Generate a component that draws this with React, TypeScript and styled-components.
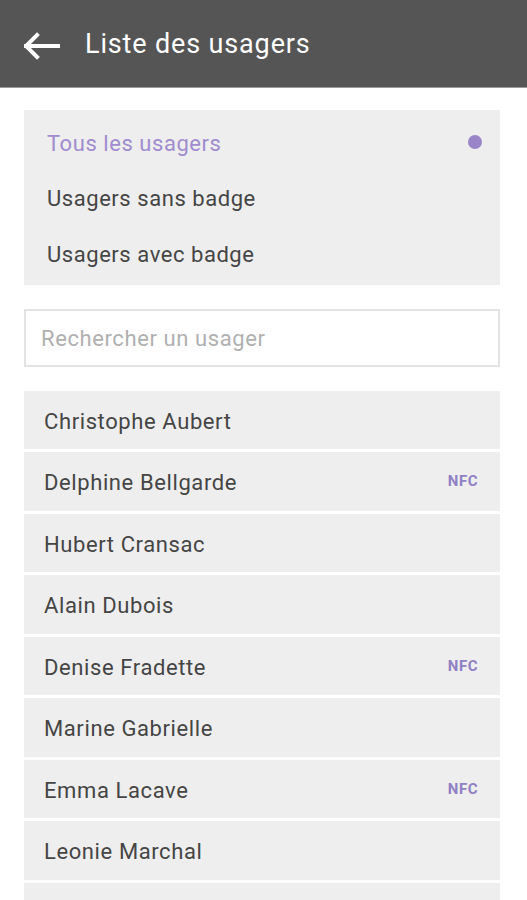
import React from 'react';
import styled, { createGlobalStyle } from 'styled-components';

const GlobalStyle = createGlobalStyle`
  body {
    margin: 0;
    background: #ffffff;
    font-family: Roboto, "Liberation Sans", sans-serif;
  }
`;

const Page = styled.div`
  width: 527px;
  height: 900px;
  background: #ffffff;
  overflow: hidden;
`;

const Header = styled.header`
  height: 88px;
  background: #555555;
  display: flex;
  align-items: center;
  padding-left: 24px;
  box-sizing: border-box;
  border-bottom: 1px solid #9a9a9a;
`;

const BackButton = styled.button`
  width: 36px;
  height: 36px;
  padding: 0;
  border: none;
  background: none;
  display: flex;
  align-items: center;
  cursor: pointer;
`;

const Title = styled.h1`
  margin: 0 0 0 25px;
  font-size: 27px;
  font-weight: 400;
  color: #ffffff;
  letter-spacing: 0.85px;
`;

const Content = styled.main`
  padding: 22px 27px 0 24px;
  display: flex;
  flex-direction: column;
`;

const FilterPanel = styled.div`
  background: #eeeeee;
  padding: 4px 0;
  display: flex;
  flex-direction: column;
`;

const FilterItem = styled.div<{ active?: boolean }>`
  height: 55.5px;
  box-sizing: border-box;
  display: flex;
  align-items: center;
  justify-content: space-between;
  padding: 3px 18px 0 23px;
  font-size: 22px;
  letter-spacing: 0.55px;
  color: ${props => (props.active ? '#a08ccf' : '#454545')};
`;

const Dot = styled.span`
  width: 14px;
  height: 14px;
  border-radius: 50%;
  margin-top: -2px;
  background: #9a85c8;
`;

const SearchInput = styled.input`
  margin-top: 24px;
  height: 58px;
  box-sizing: border-box;
  border: 2px solid #e3e3e3;
  padding: 2px 15px 0;
  font-family: Roboto, "Liberation Sans", sans-serif;
  font-size: 22px;
  letter-spacing: 0.6px;
  color: #444444;
  outline: none;
  &::placeholder {
    color: #b0b0b0;
  }
`;

const UserList = styled.ul`
  list-style: none;
  margin: 24px 0 0;
  padding: 0;
  display: flex;
  flex-direction: column;
  gap: 3px;
`;

const UserRow = styled.li`
  height: 58.5px;
  box-sizing: border-box;
  background: #eeeeee;
  display: flex;
  align-items: center;
  justify-content: space-between;
  padding: 3px 22px 0 20px;
  font-size: 22px;
  letter-spacing: 0.6px;
  color: #454545;
`;

const NfcTag = styled.span`
  font-size: 15px;
  font-weight: 700;
  letter-spacing: 0.5px;
  color: #9080c4;
  align-self: flex-start;
  margin-top: 17px;
`;

const filters = [
  { label: 'Tous les usagers', active: true },
  { label: 'Usagers sans badge', active: false },
  { label: 'Usagers avec badge', active: false },
];

const users = [
  { name: 'Christophe Aubert', nfc: false },
  { name: 'Delphine Bellgarde', nfc: true },
  { name: 'Hubert Cransac', nfc: false },
  { name: 'Alain Dubois', nfc: false },
  { name: 'Denise Fradette', nfc: true },
  { name: 'Marine Gabrielle', nfc: false },
  { name: 'Emma Lacave', nfc: true },
  { name: 'Leonie Marchal', nfc: false },
  { name: 'Lucie Noiret', nfc: false },
];

const BackArrow = () => (
  <svg width="36" height="36" viewBox="0 0 36 36">
    <path
      d="M2 20 H34 M13 9 L2 20 L13 31"
      fill="none"
      stroke="#ffffff"
      strokeWidth="4"
      strokeLinecap="square"
      strokeLinejoin="miter"
    />
  </svg>
);

const App: React.FC = () => {
  return (
    <Page>
      <GlobalStyle />
      <Header>
        <BackButton aria-label="Retour">
          <BackArrow />
        </BackButton>
        <Title>Liste des usagers</Title>
      </Header>
      <Content>
        <FilterPanel>
          {filters.map(f => (
            <FilterItem key={f.label} active={f.active}>
              {f.label}
              {f.active && <Dot />}
            </FilterItem>
          ))}
        </FilterPanel>
        <SearchInput placeholder="Rechercher un usager" />
        <UserList>
          {users.map(u => (
            <UserRow key={u.name}>
              {u.name}
              {u.nfc && <NfcTag>NFC</NfcTag>}
            </UserRow>
          ))}
        </UserList>
      </Content>
    </Page>
  );
};

export default App;
